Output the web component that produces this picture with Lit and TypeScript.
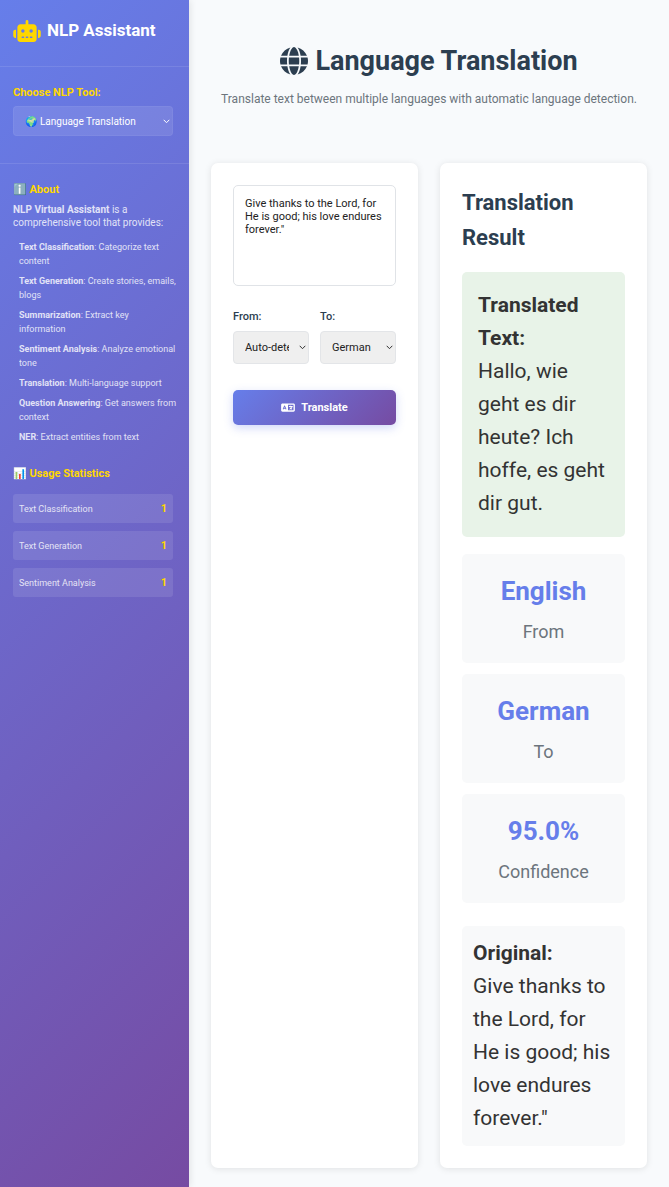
import { LitElement, html, css } from "lit";
import { customElement, state } from "lit/decorators.js";

const FEATURES = [
  ["Text Classification", "Categorize text content"],
  ["Text Generation", "Create stories, emails, blogs"],
  ["Summarization", "Extract key information"],
  ["Sentiment Analysis", "Analyze emotional tone"],
  ["Translation", "Multi-language support"],
  ["Question Answering", "Get answers from context"],
  ["NER", "Extract entities from text"],
];

const USAGE: [string, number][] = [
  ["Text Classification", 1],
  ["Text Generation", 1],
  ["Sentiment Analysis", 1],
];

const METRICS = [
  ["English", "From"],
  ["German", "To"],
  ["95.0%", "Confidence"],
];

const robotIcon = html`<svg class="icon-robot" viewBox="0 0 640 512" aria-hidden="true"><path fill="currentColor" d="M320 0c17.7 0 32 14.3 32 32V96H472c39.8 0 72 32.2 72 72V440c0 39.8-32.2 72-72 72H168c-39.8 0-72-32.2-72-72V168c0-39.8 32.2-72 72-72H288V32c0-17.7 14.3-32 32-32zM208 384c-8.8 0-16 7.2-16 16s7.2 16 16 16h32c8.8 0 16-7.2 16-16s-7.2-16-16-16H208zm96 0c-8.8 0-16 7.2-16 16s7.2 16 16 16h32c8.8 0 16-7.2 16-16s-7.2-16-16-16H304zm96 0c-8.8 0-16 7.2-16 16s7.2 16 16 16h32c8.8 0 16-7.2 16-16s-7.2-16-16-16H400zM264 256a40 40 0 1 0 -80 0 40 40 0 1 0 80 0zm152 40a40 40 0 1 0 0-80 40 40 0 1 0 0 80zM48 224H64V416H48c-26.5 0-48-21.5-48-48V272c0-26.5 21.5-48 48-48zm544 0c26.5 0 48 21.5 48 48v96c0 26.5-21.5 48-48 48H576V224h16z"/></svg>`;

const globeIcon = html`<svg class="icon-globe" viewBox="0 0 512 512" aria-hidden="true"><path fill="currentColor" d="M352 256c0 22.2-1.2 43.6-3.3 64H163.3c-2.2-20.4-3.3-41.8-3.3-64s1.2-43.6 3.3-64H348.7c2.2 20.4 3.3 41.8 3.3 64zm28.8-64H503.9c5.3 20.5 8.1 41.9 8.1 64s-2.8 43.5-8.1 64H380.8c2.1-20.6 3.2-42 3.2-64s-1.1-43.4-3.2-64zm112.6-32H376.7c-10-63.9-29.8-117.4-55.3-151.6c78.3 20.7 142 77.5 171.9 151.6zm-149.1 0H167.7c6.1-36.4 15.5-68.6 27-94.7c10.5-23.6 22.2-40.7 33.5-51.5C239.4 3.2 248.7 0 256 0s16.6 3.2 27.8 13.8c11.3 10.8 23 27.9 33.5 51.5c11.6 26 20.9 58.2 27 94.7zm-209 0H18.6C48.6 85.9 112.2 29.1 190.6 8.4C165.1 42.6 145.3 96.1 135.3 160zM8.1 192H131.2c-2.1 20.6-3.2 42-3.2 64s1.1 43.4 3.2 64H8.1C2.8 299.5 0 278.1 0 256s2.8-43.5 8.1-64zM194.7 446.6c-11.6-26-20.9-58.2-27-94.6H344.3c-6.1 36.4-15.5 68.6-27 94.6c-10.5 23.6-22.2 40.7-33.5 51.5C272.6 508.8 263.3 512 256 512s-16.6-3.2-27.8-13.8c-11.3-10.8-23-27.9-33.5-51.5zM135.3 352c10 63.9 29.8 117.4 55.3 151.6C112.2 482.9 48.6 426.1 18.6 352H135.3zm358.1 0c-30 74.1-93.6 130.9-171.9 151.6c25.5-34.2 45.2-87.7 55.3-151.6H493.4z"/></svg>`;

const languageIcon = html`<svg class="icon-language" viewBox="0 0 640 512" aria-hidden="true"><path fill="currentColor" d="M0 128C0 92.7 28.7 64 64 64H256h48 16H576c35.3 0 64 28.7 64 64V384c0 35.3-28.7 64-64 64H320 304 256 64c-35.3 0-64-28.7-64-64V128zm320 0V384H576V128H320zM178.3 175.9c-3.2-7.2-10.4-11.9-18.3-11.9s-15.1 4.7-18.3 11.9l-64 144c-4.5 10.1 .1 21.9 10.2 26.4s21.9-.1 26.4-10.2l8.9-20.1h73.6l8.9 20.1c4.5 10.1 16.3 14.7 26.4 10.2s14.7-16.3 10.2-26.4l-64-144zM160 233.2L179 276H141l19-42.8zM448 164c11 0 20 9 20 20v4h44 16c11 0 20 9 20 20s-9 20-20 20h-2l-1.6 4.5c-8.9 24.4-22.4 46.6-39.6 65.4c.9 .6 1.8 1.1 2.7 1.6l18.9 11.3c9.5 5.7 12.5 18 6.9 27.4s-18 12.5-27.4 6.9l-18.9-11.3c-4.5-2.7-8.8-5.5-13.1-8.5c-10.6 7.5-21.9 14-34 19.4l-3.6 1.6c-10.1 4.5-21.9-.1-26.4-10.2s.1-21.9 10.2-26.4l3.6-1.6c6.4-2.9 12.6-6.1 18.5-9.8l-12.2-12.2c-7.8-7.8-7.8-20.5 0-28.3s20.5-7.8 28.3 0l14.6 14.6 .5 .5c12.4-13.1 22.5-28.3 29.8-45H448 376c-11 0-20-9-20-20s9-20 20-20h52v-4c0-11 9-20 20-20z"/></svg>`;

@customElement("app-root")
export class AppRoot extends LitElement {
  @state() private source = 'Give thanks to the Lord, for\nHe is good; his love endures forever."';

  static styles = css`
    :host {
      display: flex;
      min-height: 100vh;
      font-family: Roboto, "Noto Color Emoji", sans-serif;
      color: #333;
      background: #f8fafc;
    }
    *, *::before { box-sizing: border-box; }
    h1, h2, h3, p, ul { margin: 0; padding: 0; }
    button, select, textarea { font-family: inherit; margin: 0; }

    .sidebar {
      flex: 0 0 189px;
      color: #fff;
      background: linear-gradient(135deg, #667eea 0%, #764ba2 100%);
      box-shadow: 1px 0 7px rgba(0, 0, 0, 0.1);
    }
    .brand {
      display: flex;
      align-items: center;
      gap: 6px;
      padding: 17px 13px 22px;
      border-bottom: 1px solid rgba(255, 255, 255, 0.1);
    }
    .brand-name { font-size: 17px; line-height: 27px; font-weight: 700; }
    .icon-robot { width: 28px; height: 22px; color: #ffd700; }
    .chooser {
      padding: 17px 16px 27px 13px;
      border-bottom: 1px solid rgba(255, 255, 255, 0.1);
    }
    .side-label {
      display: block;
      margin-bottom: 5px;
      font-size: 11px;
      line-height: 17px;
      font-weight: 700;
      color: #ffd700;
    }
    select {
      display: block;
      width: 100%;
      appearance: none;
      border-radius: 4px;
      background-repeat: no-repeat;
      background-position: right 2px center;
      background-size: 7px 5px;
    }
    .tool-select {
      height: 30px;
      padding: 0 19px 0 11px;
      border: 1px solid rgba(255, 255, 255, 0.05);
      font-size: 10px;
      color: #fff;
      background-color: rgba(255, 255, 255, 0.1);
      background-image: url("data:image/svg+xml,%3Csvg xmlns='http://www.w3.org/2000/svg' viewBox='0 0 7 5'%3E%3Cpath d='M.7.8 3.5 3.7 6.3.8' fill='none' stroke='white'/%3E%3C/svg%3E");
    }
    .tool-select option { color: #333; }
    .info { padding: 17px 16px 17px 13px; }
    .about-text { font-size: 10px; line-height: 13px; opacity: 0.8; }
    .features {
      display: grid;
      gap: 6px;
      list-style: none;
      margin: 11px -4px 21px 0;
      padding-left: 6px;
      font-size: 9px;
      line-height: 14px;
      opacity: 0.8;
    }
    .usage { display: grid; gap: 8px; list-style: none; margin-top: 12px; }
    .usage-row {
      display: flex;
      justify-content: space-between;
      align-items: center;
      height: 29px;
      padding: 0 6px;
      border-radius: 3px;
      background: rgba(255, 255, 255, 0.1);
      font-size: 9px;
    }
    .usage-name { opacity: 0.8; }
    .usage-count { font-size: 11px; font-weight: 700; color: #ffd700; }

    .main { flex: 1; min-width: 0; display: flex; flex-direction: column; padding: 39px 22px 19px; }
    .page-head { text-align: center; margin-bottom: 54px; }
    .title {
      display: flex;
      justify-content: center;
      align-items: center;
      gap: 7px;
      font-size: 27px;
      line-height: 44px;
      font-weight: 700;
      color: #2c3e50;
    }
    .icon-globe { width: 28px; height: 28px; }
    .subtitle { margin-top: 7px; font-size: 12px; line-height: 19px; color: #6c757d; }

    .columns { flex: 1; display: grid; grid-template-columns: repeat(2, minmax(0, 1fr)); gap: 22px; }
    .card {
      padding: 22px;
      border-radius: 7px;
      background: #fff;
      box-shadow: 0 1px 7px rgba(0, 0, 0, 0.1);
    }
    .source {
      display: block;
      width: 100%;
      height: 101px;
      padding: 11px;
      border: 1px solid #e0e3e7;
      border-radius: 5px;
      font-size: 11px;
      line-height: 13px;
      color: #222;
      background: #fff;
      resize: none;
    }
    .pair { display: grid; grid-template-columns: repeat(2, minmax(0, 1fr)); gap: 11px; margin: 22px 0 26px; }
    .field-label {
      display: block;
      margin-bottom: 6px;
      font-size: 11px;
      line-height: 17px;
      font-weight: 500;
      color: #2c3e50;
    }
    .lang-select {
      height: 33px;
      padding: 0 19px 0 11px;
      border: 1px solid #e3e5e8;
      font-size: 11px;
      color: #222;
      background-color: #efefef;
      background-image: url("data:image/svg+xml,%3Csvg xmlns='http://www.w3.org/2000/svg' viewBox='0 0 7 5'%3E%3Cpath d='M.7.8 3.5 3.7 6.3.8' fill='none' stroke='%23333'/%3E%3C/svg%3E");
    }
    .translate {
      display: flex;
      justify-content: center;
      align-items: center;
      gap: 6px;
      width: 100%;
      height: 35px;
      border: 0;
      border-radius: 5px;
      font-size: 11px;
      font-weight: 700;
      color: #fff;
      background: linear-gradient(135deg, #667eea 0%, #764ba2 100%);
      box-shadow: 0 3px 10px rgba(102, 126, 234, 0.3);
    }
    .icon-language { width: 14px; height: 11px; }

    .result-title { margin-bottom: 17px; font-size: 22px; line-height: 35px; font-weight: 700; color: #2c3e50; }
    .passage { font-size: 21px; line-height: 33px; }
    .passage strong { display: block; }
    .translated { padding: 17px 16px; border-radius: 5px; background: #e8f3e8; }
    .metrics { display: grid; gap: 11px; margin: 17px 0 23px; }
    .metric { padding: 16px; border-radius: 5px; text-align: center; background: #f8f9fa; }
    .metric-value { font-size: 26px; line-height: 43px; font-weight: 700; color: #667eea; }
    .metric-label { margin-top: 4px; font-size: 18px; line-height: 30px; color: #6c757d; }
    .original { padding: 11px; border-radius: 5px; background: #f8f9fa; }
  `;

  private onInput(e: Event) {
    this.source = (e.target as HTMLTextAreaElement).value;
  }

  render() {
    return html`
      <aside class="sidebar">
        <div class="brand">${robotIcon}<span class="brand-name">NLP Assistant</span></div>
        <div class="chooser">
          <label class="side-label" for="tool">Choose NLP Tool:</label>
          <select class="tool-select" id="tool">
            <option>🌍 Language Translation</option>
          </select>
        </div>
        <div class="info">
          <h3 class="side-label">ℹ️ About</h3>
          <p class="about-text"><strong>NLP Virtual Assistant</strong> is a comprehensive tool that provides:</p>
          <ul class="features">
            ${FEATURES.map(([name, text]) => html`<li><strong>${name}</strong>: ${text}</li>`)}
          </ul>
          <h3 class="side-label">📊 Usage Statistics</h3>
          <ul class="usage">
            ${USAGE.map(
              ([name, count]) => html`<li class="usage-row"><span class="usage-name">${name}</span><span class="usage-count">${count}</span></li>`
            )}
          </ul>
        </div>
      </aside>
      <main class="main">
        <header class="page-head">
          <h1 class="title">${globeIcon}<span>Language Translation</span></h1>
          <p class="subtitle">Translate text between multiple languages with automatic language detection.</p>
        </header>
        <div class="columns">
          <section class="card">
            <textarea class="source" aria-label="Text to translate" .value=${this.source} @input=${this.onInput}></textarea>
            <div class="pair">
              <div>
                <label class="field-label" for="from">From:</label>
                <select class="lang-select" id="from"><option>Auto-detect</option></select>
              </div>
              <div>
                <label class="field-label" for="to">To:</label>
                <select class="lang-select" id="to"><option>German</option></select>
              </div>
            </div>
            <button class="translate" type="button">${languageIcon}<span>Translate</span></button>
          </section>
          <section class="card">
            <h2 class="result-title">Translation Result</h2>
            <div class="passage translated">
              <strong>Translated Text:</strong>
              Hallo, wie geht es dir heute? Ich hoffe, es geht dir gut.
            </div>
            <div class="metrics">
              ${METRICS.map(
                ([value, label]) => html`<div class="metric"><div class="metric-value">${value}</div><div class="metric-label">${label}</div></div>`
              )}
            </div>
            <div class="passage original">
              <strong>Original:</strong>
              Give thanks to the Lord, for<br />He is good; his love endures forever."
            </div>
          </section>
        </div>
      </main>
    `;
  }
}
